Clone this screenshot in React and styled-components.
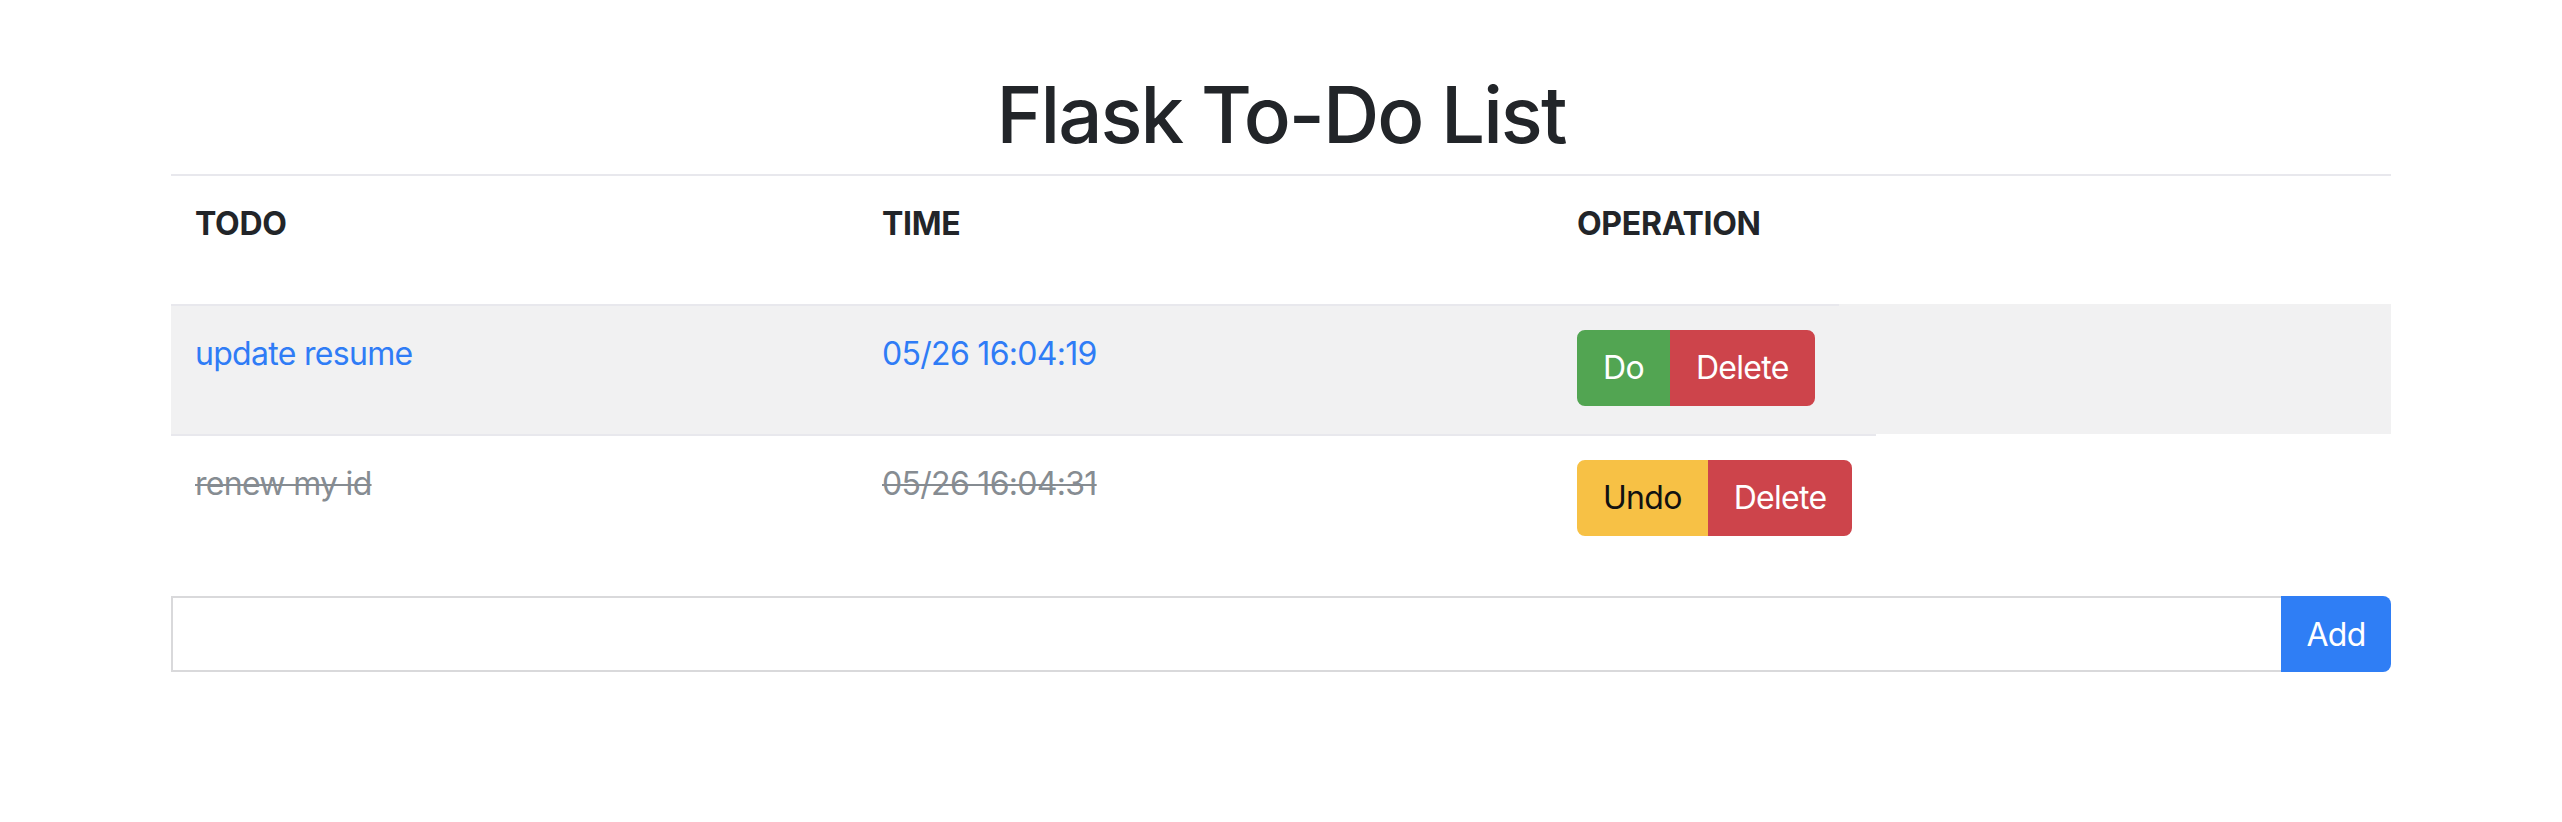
import React, { useState } from "react";
import styled, { createGlobalStyle } from "styled-components";

const GlobalStyle = createGlobalStyle`
  html, body {
    margin: 0;
    padding: 0;
    background: #ffffff;
  }
  body {
    font-family: Inter, "Noto Sans", "Liberation Sans", sans-serif;
    color: #222529;
  }
`;

const todos = [
  { id: 1, title: "update resume", time: "05/26 16:04:19", done: false },
  { id: 2, title: "renew my id", time: "05/26 16:04:31", done: true },
];

function App() {
  const [items] = useState(todos);

  return (
    <Container>
      <GlobalStyle />
      <Title>Flask To-Do List</Title>
      <Table>
        <Row>
          <HeadCell>Todo</HeadCell>
          <HeadCell>Time</HeadCell>
          <HeadCell>Operation</HeadCell>
        </Row>
        {items.map((item, i) => (
          <Row key={item.id} $striped={i % 2 === 0}>
            <Cell>
              <Text $done={item.done}>{item.title}</Text>
            </Cell>
            <Cell>
              <Text $done={item.done}>{item.time}</Text>
            </Cell>
            <Cell $fit>
              <BtnGroup>
                {item.done ? (
                  <Btn $kind="warning">Undo</Btn>
                ) : (
                  <Btn $kind="success">Do</Btn>
                )}
                <Btn $kind="danger">Delete</Btn>
              </BtnGroup>
            </Cell>
          </Row>
        ))}
      </Table>
      <AddForm onSubmit={(e) => e.preventDefault()}>
        <Field type="text" />
        <AddBtn type="submit">Add</AddBtn>
      </AddForm>
    </Container>
  );
}

export default App;

const Container = styled.div`
  width: 2220px;
  margin: 0 auto;
  padding-top: 67px;
`;

const Title = styled.h1`
  margin: 0 0 11px;
  font-size: 78px;
  font-weight: 500;
  line-height: 96px;
  text-align: center;
  letter-spacing: -2px;
  color: #222529;
`;

const Table = styled.div`
  margin-bottom: 32px;
`;

const Row = styled.div`
  display: grid;
  grid-template-columns: 687px 695px 1fr;
  align-items: stretch;
  background: ${(p) => (p.$striped ? "#f1f1f2" : "transparent")};
`;

const Cell = styled.div`
  justify-self: ${(p) => (p.$fit ? "start" : "stretch")};
  min-height: 80px;
  padding: 24px;
  border-top: 2px solid #e8e8ed;
  font-size: 32px;
  line-height: 48px;
  letter-spacing: -0.7px;
`;

const HeadCell = styled(Cell)`
  font-weight: 700;
  text-transform: uppercase;
  color: #222529;
  letter-spacing: -0.3px;
`;

const Text = styled.span`
  color: ${(p) => (p.$done ? "#868c92" : "#2f7cf6")};
  text-decoration: ${(p) => (p.$done ? "line-through" : "none")};
  text-decoration-thickness: 2px;
`;

const colors = {
  success: { bg: "#52a552", fg: "#ffffff" },
  danger: { bg: "#cd444b", fg: "#ffffff" },
  warning: { bg: "#f7c145", fg: "#111111" },
};

const BtnGroup = styled.div`
  display: inline-flex;
  vertical-align: top;
`;

const Btn = styled.button`
  font-family: inherit;
  font-size: 32px;
  line-height: 48px;
  letter-spacing: -0.7px;
  padding: 12px 24px;
  border: 2px solid ${(p) => colors[p.$kind].bg};
  background: ${(p) => colors[p.$kind].bg};
  color: ${(p) => colors[p.$kind].fg};
  border-radius: 0;
  cursor: pointer;
  &:first-child {
    border-radius: 8px 0 0 8px;
  }
  &:last-child {
    border-radius: 0 8px 8px 0;
  }
`;

const AddForm = styled.form`
  display: flex;
  height: 76px;
`;

const Field = styled.input`
  flex: 1;
  box-sizing: border-box;
  height: 76px;
  margin: 0;
  border: 2px solid #d9d9db;
  border-right: none;
  border-radius: 0;
  font-family: inherit;
  font-size: 32px;
  padding: 0 24px;
  outline: none;
`;

const AddBtn = styled.button`
  width: 110px;
  height: 76px;
  border: none;
  border-radius: 0 8px 8px 0;
  background: #2f7ef5;
  color: #ffffff;
  font-family: inherit;
  font-size: 32px;
  letter-spacing: -0.7px;
  cursor: pointer;
`;
